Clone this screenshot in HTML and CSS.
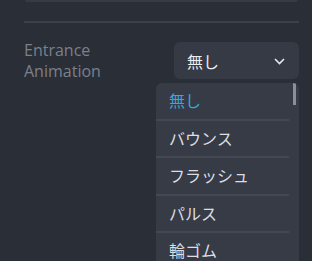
FILE: index.html
```html
<!DOCTYPE html>
<html lang="ja">
<head>
  <meta charset="UTF-8" />
  <title>Entrance Animation</title>
  <link rel="stylesheet" href="styles.css">
</head>
<body>
  <div class="panel">
    <div class="card-edge"></div>
    <hr class="divider">

    <div class="field">
      <label class="field-label">Entrance<br>Animation</label>
      <div class="select-wrap">
        <div class="select">
          <span>無し</span>
          <svg class="chevron" width="11" height="7" viewBox="0 0 11 7"><path d="M1 1l4.5 4.5L10 1" fill="none" stroke="#e6e8ec" stroke-width="1.6"/></svg>
        </div>

        <!-- open dropdown -->
        <div class="dropdown">
          <ul class="options">
            <li class="active">無し</li>
            <li>バウンス</li>
            <li>フラッシュ</li>
            <li>パルス</li>
            <li>輪ゴム</li>
          </ul>
          <div class="scrollbar"><div class="thumb"></div></div>
        </div>
      </div>
    </div>
  </div>
</body>
</html>
```

FILE: styles.css
```css
body { margin: 0; background: #2a2e37; font-family: "Open Sans", "Noto Sans CJK JP", sans-serif; overflow: hidden; }
.panel { padding: 0 13px 0 24px; height: 261px; overflow: hidden; }
.card-edge { height: 2px; margin: 0 1px; background: #353a44; border-radius: 0 0 5px 5px; }
.divider { border: none; height: 2px; background: #3b404a; margin: 19px 0 0; }
.field { display: flex; justify-content: space-between; margin-top: 19px; }
.field-label { color: #7b808b; font-size: 16px; line-height: 21px; margin-top: -2px; }
.select-wrap { position: relative; width: 125px; }
.select { height: 37px; background: #353a45; border-radius: 6px; display: flex; align-items: center; justify-content: space-between; padding: 0 14px 0 13px; color: #eceef1; font-size: 16px; }
.chevron { display: block; margin-top: 2px; }
.dropdown { position: absolute; top: 41px; left: -18px; width: 143px; height: 178px; overflow: hidden; background: #363b46; border-radius: 6px 6px 0 0; display: flex; }
.options { list-style: none; margin: 0; padding: 0; width: 133px; }
.options li { height: 35.5px; line-height: 37px; padding-left: 13px; color: #dcdee2; font-size: 16px; border-bottom: 2px solid #434853; }
.options li.active { color: #3aa7d9; }
.scrollbar { flex: 1; padding-left: 4px; }
.thumb { width: 3px; height: 22px; background: #8c8f96; }
```
